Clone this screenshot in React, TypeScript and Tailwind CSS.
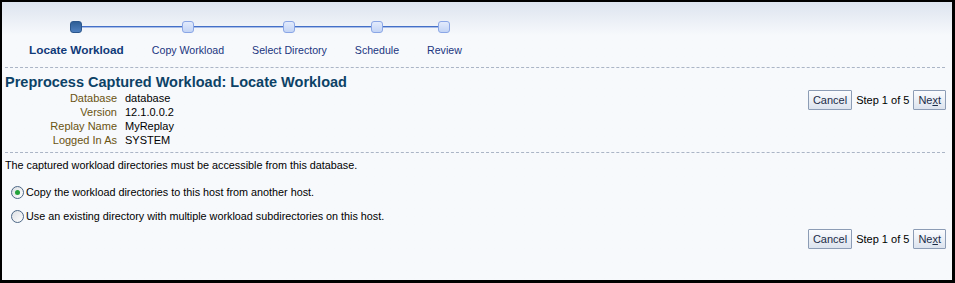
const steps = ["Locate Workload", "Copy Workload", "Select Directory", "Schedule", "Review"];

const info: [string, string][] = [
  ["Database", "database"],
  ["Version", "12.1.0.0.2"],
  ["Replay Name", "MyReplay"],
  ["Logged In As", "SYSTEM"],
];

function Train() {
  return (
    <div className="flex pl-[13px] pt-[19px]">
      {steps.map((s, i) => (
        <div key={s} className="flex flex-col items-center">
          <div className="flex items-center w-full">
            <div className={`flex-1 h-[2px] ${i === 0 ? "" : "border-t border-[#4470c8] bg-[#a9bde8]"}`} />
            {i === 0 ? (
              <div className="w-[12px] h-[12px] rounded-[3px] border border-[#2b568c] bg-gradient-to-b from-[#2e5e96] to-[#4f80bf]" />
            ) : (
              <div className="w-[12px] h-[12px] rounded-[3px] border border-[#8aa6e6] bg-gradient-to-b from-[#e3ebfc] to-[#c3d4f5]" />
            )}
            <div
              className={`flex-1 h-[2px] ${
                i === steps.length - 1 ? "" : "border-t border-[#4470c8] bg-[#a9bde8]"
              }`}
            />
          </div>
          <div
            className={`mt-[11px] px-[14px] leading-[13px] whitespace-nowrap ${
              i === 0 ? "font-bold text-[11.8px] text-[#103a78]" : "text-[10.6px] text-[#1a3580]"
            }`}
          >
            {s}
          </div>
        </div>
      ))}
    </div>
  );
}

function Btn({ children }: { children: React.ReactNode }) {
  return (
    <button className="h-[20px] px-[4px] border border-[#8c9cb5] rounded-[1px] bg-gradient-to-b from-[#fbfcfe] to-[#dce3ee] text-[11px] text-[#1b2c48] leading-[18px]">
      {children}
    </button>
  );
}

function Nav() {
  return (
    <div className="flex items-center gap-[4px] text-[11px] text-black">
      <Btn>Cancel</Btn>
      <span className="whitespace-nowrap">Step 1 of 5</span>
      <Btn>
        Ne<span className="underline">x</span>t
      </Btn>
    </div>
  );
}

function Radio({ checked }: { checked?: boolean }) {
  return (
    <span className="w-[13px] h-[13px] rounded-full border border-[#4c6786] bg-gradient-to-br from-[#dcdfe3] to-white flex items-center justify-center shrink-0">
      {checked && <span className="w-[5px] h-[5px] rounded-full bg-[#23a23a]" />}
    </span>
  );
}

export default function App() {
  return (
    <div
      className="w-[955px] h-[283px] border-l-2 border-t-2 border-r-[3px] border-b-[3px] border-black bg-[#f7f9fc] bg-gradient-to-b from-[#dde4ef] via-[#f7f9fc] via-[12%] to-[#f7f9fc] overflow-hidden text-[11px] text-black"
      style={{ fontFamily: '"Liberation Sans", Arial, sans-serif' }}
    >
      <Train />
      <div className="mx-[3px] mt-[10px] border-t border-dashed border-[#abb5c6] w-[940px]" />
      <div className="pl-[3px] pr-[6px] mt-[6px]">
        <div className="text-[14.5px] leading-[16px] font-bold text-[#0c4266]">
          Preprocess Captured Workload: Locate Workload
        </div>
        <div className="flex justify-between">
          <div className="grid grid-cols-[112px_auto] gap-x-[8px] mt-[1px]">
            {info.map(([k, v]) => (
              <div key={k} className="contents">
                <div className="text-right text-[#6a5310] leading-[14px]">{k}</div>
                <div className="leading-[14px]">{v}</div>
              </div>
            ))}
          </div>
          <div>
            <Nav />
          </div>
        </div>
        <div className="mt-[5px] border-t border-dashed border-[#abb5c6] w-[940px]" />
        <div className="mt-[5px] leading-[14px] text-[10.8px]">
          The captured workload directories must be accessible from this database.
        </div>
        <div className="mt-[12px] flex items-center gap-[2px] pl-[6px] text-[10.8px]">
          <Radio checked />
          <span>Copy the workload directories to this host from another host.</span>
        </div>
        <div className="mt-[8px] flex items-center gap-[2px] pl-[6px] text-[10.8px]">
          <Radio />
          <span>Use an existing directory with multiple workload subdirectories on this host.</span>
        </div>
        <div className="flex justify-end mt-[5px]">
          <Nav />
        </div>
      </div>
    </div>
  );
}
